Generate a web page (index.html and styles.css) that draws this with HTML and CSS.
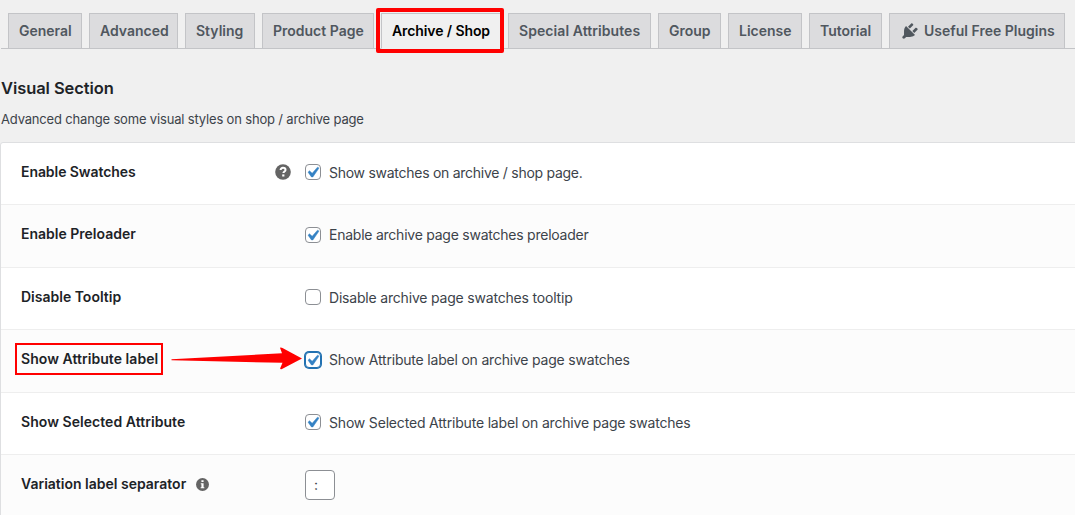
FILE: index.html
```html
<!DOCTYPE html>
<html lang="en">
<head>
<meta charset="utf-8">
<title>Archive / Shop settings</title>
<link rel="stylesheet" href="styles.css">
</head>
<body>
<nav class="tabs">
  <a class="tab">General</a>
  <a class="tab">Advanced</a>
  <a class="tab">Styling</a>
  <a class="tab">Product Page</a>
  <a class="tab active">Archive / Shop</a>
  <a class="tab t-special">Special Attributes</a>
  <a class="tab">Group</a>
  <a class="tab">License</a>
  <a class="tab">Tutorial</a>
  <a class="tab tab-icon">
    <svg class="plug" viewBox="0 0 20 20"><path d="M13.11 4.36L9.87 7.6 8 5.73l3.24-3.24c.35-.34 1.05-.2 1.56.32.52.51.66 1.21.31 1.55zm-8 1.77l.91-1.12 9.01 9.01-1.19.84c-.71.71-2.63 1.16-3.82 1.16H6.14L4.9 17.26c-.59.59-1.54.59-2.12 0-.59-.58-.59-1.53 0-2.12l1.24-1.24v-3.88c0-1.13.4-3.19 1.09-3.89zm7.26 3.97l3.24-3.24c.34-.35 1.04-.21 1.55.31.52.51.66 1.21.31 1.55l-3.24 3.25z"/></svg>
    <span>Useful Free Plugins</span></a>
</nav>
<h2 class="title">Visual Section</h2>
<p class="desc">Advanced change some visual styles on shop / archive page</p>
<main class="card">
  <div class="row">
    <div class="label"><span class="l-swatches">Enable Swatches</span>
      <svg class="help" viewBox="0 0 16 16"><circle cx="8" cy="8" r="7.8"/><path d="M5.6 6.1C5.6 4.6 6.6 3.8 8 3.8s2.5.8 2.5 2.1c0 1.6-2.1 1.7-2.1 3.2"/><rect x="7.2" y="10.4" width="2.2" height="2.1"/></svg></div>
    <div class="field"><i class="box"><svg viewBox="0 0 20 20"><path d="M14.83 4.89l1.34.94-5.81 8.38H9.02L5.78 9.67l1.34-1.25 2.57 2.4z"/></svg></i><span class="f-swatches">Show swatches on archive / shop page.</span></div>
  </div>
  <div class="row">
    <div class="label"><span>Enable Preloader</span></div>
    <div class="field"><i class="box low"><svg viewBox="0 0 20 20"><path d="M14.83 4.89l1.34.94-5.81 8.38H9.02L5.78 9.67l1.34-1.25 2.57 2.4z"/></svg></i><span class="f-preloader">Enable archive page swatches preloader</span></div>
  </div>
  <div class="row">
    <div class="label"><span>Disable Tooltip</span></div>
    <div class="field"><i class="box"></i><span class="f-tooltip">Disable archive page swatches tooltip</span></div>
  </div>
  <div class="row">
    <div class="label"><span class="l-wide">Show Attribute label</span></div>
    <div class="field"><i class="box low focus"><svg viewBox="0 0 20 20"><path d="M14.83 4.89l1.34.94-5.81 8.38H9.02L5.78 9.67l1.34-1.25 2.57 2.4z"/></svg></i><span class="f-label">Show Attribute label on archive page swatches</span></div>
  </div>
  <div class="row">
    <div class="label"><span class="l-wide">Show Selected Attribute</span></div>
    <div class="field"><i class="box"><svg viewBox="0 0 20 20"><path d="M14.83 4.89l1.34.94-5.81 8.38H9.02L5.78 9.67l1.34-1.25 2.57 2.4z"/></svg></i><span class="f-selected">Show Selected Attribute label on archive page swatches</span></div>
  </div>
  <div class="row last">
    <div class="label"><span>Variation label separator</span>
      <svg class="info" viewBox="0 0 12 12"><circle cx="6" cy="6" r="6"/><path d="M5 2h2v1.7H5zM4.4 4.8H7v3.7h.7v1H4.3v-1H5V5.8h-.6z"/></svg></div>
    <div class="field"><div class="input">:</div></div>
  </div>
</main>
<div class="mark mark-tab"></div>
<div class="mark mark-label"></div>
<svg class="arrow" viewBox="0 0 132 24"><path d="M0.5 12.2L111 6.3L109 0.7Q110 0 111.5 1L131 11.5L111 22Q109 22.6 109.2 21.3L111.5 15.8L0.5 13.2Z"/></svg>
</body>
</html>
```
FILE: styles.css
```css
* { box-sizing: border-box; }
body { margin: 0; width: 1075px; height: 515px; overflow: hidden; position: relative; background: #f0f0f0; color: #3c434a; font-family: Inter, "Liberation Sans", sans-serif; font-size: 14px; }
span, .tab { white-space: nowrap; }
.tabs { display: grid; grid-template-columns: 74px 89px 70px 112px 120px 143px 63px 74px 73px 176px; gap: 7px; height: 49px; margin-left: 1px; padding: 13px 0 0 7px; border-bottom: 1px solid #c3c4c7; }
.tab { height: 36px; border: 1px solid #c3c4c7; background: #dcdcde; color: #50575e; font-weight: 600; line-height: 34px; padding-left: 10px; }
.active { background: #f0f0f0; border-bottom-color: #f0f0f0; color: #000; letter-spacing: -0.1px; }
.t-special { letter-spacing: 0.07px; }
.tab-icon { display: flex; align-items: center; padding-left: 10px; }
.plug { width: 20px; height: 20px; margin-right: 4px; fill: #50575e; }
.title { margin: 28px 0 0 1px; font-size: 16.5px; line-height: 22px; font-weight: 600; color: #1d2327; letter-spacing: -0.08px; }
.desc { margin: 10px 0 0 1px; font-size: 13px; line-height: 20px; letter-spacing: -0.17px; }
.card { display: grid; grid-template-rows: 62px 63px 62px 63px 62px 63px; margin-top: 13px; border: 1px solid #dedfe1; border-radius: 3px 0 0; overflow: hidden; background: #fff; height: 380px; width: 1080px; }
.row { display: grid; grid-template-columns: 304px 1fr; border-bottom: 1px solid #eee; }
.row:nth-child(even) { background: #fcfcfc; }
.label { display: flex; align-items: center; height: 20px; margin-top: 19px; padding-left: 20px; color: #1d2327; font-weight: 600; line-height: 20px; }
.l-swatches { letter-spacing: -0.07px; }
.l-wide { letter-spacing: 0.05px; }
.help { width: 16px; height: 16px; margin: 0 14px 0 auto; fill: #646464; }
.help path { fill: none; stroke: #fff; stroke-width: 2; }
.help rect { fill: #fff; }
.info { width: 13px; height: 13px; margin: 1px 0 0 10px; fill: #646464; }
.info path { fill: #fff; }
.field { display: flex; align-items: center; height: 20px; margin-top: 20px; line-height: 20px; }
.f-swatches { letter-spacing: -0.27px; }
.f-preloader { letter-spacing: -0.24px; }
.f-tooltip { letter-spacing: -0.19px; }
.f-label { letter-spacing: -0.2px; }
.f-selected { letter-spacing: -0.185px; }
.box { width: 16px; height: 16px; margin: -2px 8px 0 0; border: 1px solid #8c8f94; border-radius: 4px; background: #fff; }
.low { margin-top: 0; }
.box svg { display: block; width: 21px; height: 21px; margin: -3px 0 0 -4px; fill: #3582c4; stroke: #3582c4; stroke-width: 0.5px; }
.focus { border-color: #2271b1; box-shadow: 0 0 0 1px #2271b1; }
.last .field { margin-top: 15px; height: 30px; }
.input { width: 30px; height: 30px; border: 1px solid #8c8f94; border-radius: 4px; background: #fff; padding-left: 8px; line-height: 28px; }
.mark { position: absolute; border: 2px solid #f00; }
.mark-tab { left: 376px; top: 8px; width: 128px; height: 45px; border-width: 4px; border-radius: 2px; }
.mark-label { left: 15px; top: 343px; width: 148px; height: 32px; }
.arrow { position: absolute; left: 171px; top: 347px; width: 132px; height: 24px; fill: #f00; }
```
